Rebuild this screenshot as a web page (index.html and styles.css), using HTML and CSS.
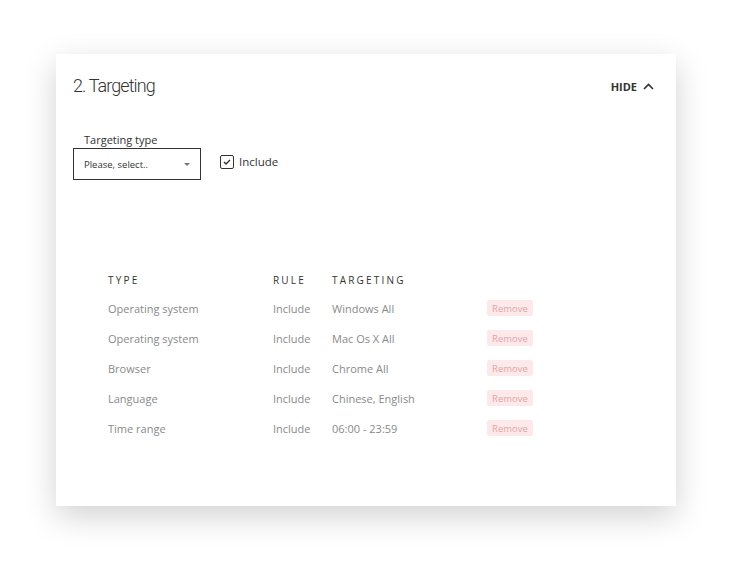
FILE: index.html
```html
<!DOCTYPE html>
<html lang="en">
<head>
    <meta charset="UTF-8">
    <title>Targeting</title>
    <link rel="stylesheet" href="styles.css">
</head>
<body>
    <div class="card">
        <div class="card-header">
            <h2>2. Targeting</h2>
            <a class="toggle" href="#">HIDE
                <svg width="11" height="7" viewBox="0 0 11 7"><path d="M1 6 L5.5 1.5 L10 6" fill="none" stroke="#333" stroke-width="1.6"/></svg>
            </a>
        </div>

        <div class="filters">
            <div class="field">
                <label>Targeting type</label>
                <div class="select">
                    <span>Please, select..</span>
                    <span class="caret"></span>
                </div>
            </div>
            <label class="check">
                <span class="box">
                    <svg width="8" height="6" viewBox="0 0 8 6"><path d="M1 3 L3 5 L7 1" fill="none" stroke="#333" stroke-width="1.4"/></svg>
                </span>
                Include
            </label>
        </div>

        <div class="rules">
            <div class="row head">
                <span>Type</span>
                <span>Rule</span>
                <span>Targeting</span>
                <span></span>
            </div>
            <div class="row">
                <span>Operating system</span>
                <span>Include</span>
                <span>Windows All</span>
                <span><button class="remove">Remove</button></span>
            </div>
            <div class="row">
                <span>Operating system</span>
                <span>Include</span>
                <span>Mac Os X All</span>
                <span><button class="remove">Remove</button></span>
            </div>
            <div class="row">
                <span>Browser</span>
                <span>Include</span>
                <span>Chrome All</span>
                <span><button class="remove">Remove</button></span>
            </div>
            <div class="row">
                <span>Language</span>
                <span>Include</span>
                <span>Chinese, English</span>
                <span><button class="remove">Remove</button></span>
            </div>
            <div class="row">
                <span>Time range</span>
                <span>Include</span>
                <span>06:00 - 23:59</span>
                <span><button class="remove">Remove</button></span>
            </div>
        </div>
    </div>
</body>
</html>
```

FILE: styles.css
```css
:root {
    --text-dark: #333333;
    --text-muted: #8a8a8a;
    --remove-bg: #fde9e9;
    --remove-text: #eba3a3;
}

html, body {
    margin: 0;
    min-height: 100vh;
    background: #ffffff;
}

body {
    font-family: 'Open Sans', sans-serif;
    color: var(--text-dark);
    padding: 54px 0 0 56px;
    box-sizing: border-box;
}

.card {
    width: 620px;
    height: 452px;
    box-sizing: border-box;
    background: #ffffff;
    box-shadow: 0 10px 30px rgba(0, 0, 0, 0.18);
    padding: 20px 22px 0 17px;
}

.card-header {
    display: flex;
    justify-content: space-between;
    align-items: center;
}

h2 {
    margin: 0;
    font-family: Roboto, sans-serif;
    font-size: 18px;
    font-weight: 300;
    letter-spacing: -0.9px;
    line-height: 24px;
}

.toggle {
    display: flex;
    align-items: center;
    gap: 6px;
    font-size: 11px;
    font-weight: 700;
    color: var(--text-dark);
    text-decoration: none;
}

.filters {
    display: flex;
    align-items: flex-start;
    margin-top: 35px;
}

.field label {
    display: block;
    font-size: 11px;
    padding-left: 11px;
    line-height: 14px;
    margin-bottom: 1px;
}

.select {
    width: 128px;
    height: 32px;
    box-sizing: border-box;
    border: 1px solid var(--text-dark);
    display: flex;
    align-items: center;
    justify-content: space-between;
    padding: 0 10px 0 10px;
    font-size: 9.5px;
}

.caret {
    width: 0;
    height: 0;
    border-left: 3px solid transparent;
    border-right: 3px solid transparent;
    border-top: 3px solid #777;
}

.check {
    display: flex;
    align-items: center;
    gap: 5px;
    margin: 21px 0 0 19px;
    font-size: 11.5px;
}

.box {
    width: 12px;
    height: 12px;
    border: 1px solid var(--text-dark);
    border-radius: 2px;
    display: flex;
    align-items: center;
    justify-content: center;
}

.rules {
    margin: 90px 0 0 35px;
}

.row {
    display: grid;
    grid-template-columns: 165px 59px 155px 60px;
    align-items: center;
    height: 30px;
    font-size: 11px;
    color: var(--text-muted);
}

.row.head {
    color: var(--text-dark);
    font-size: 10px;
    text-transform: uppercase;
    letter-spacing: 2.2px;
    height: 20px;
    margin-bottom: 3px;
}

.remove {
    background: var(--remove-bg);
    color: var(--remove-text);
    border: none;
    border-radius: 2px;
    font-family: inherit;
    font-size: 9.5px;
    width: 46px;
    height: 16px;
    padding: 0;
}
```
